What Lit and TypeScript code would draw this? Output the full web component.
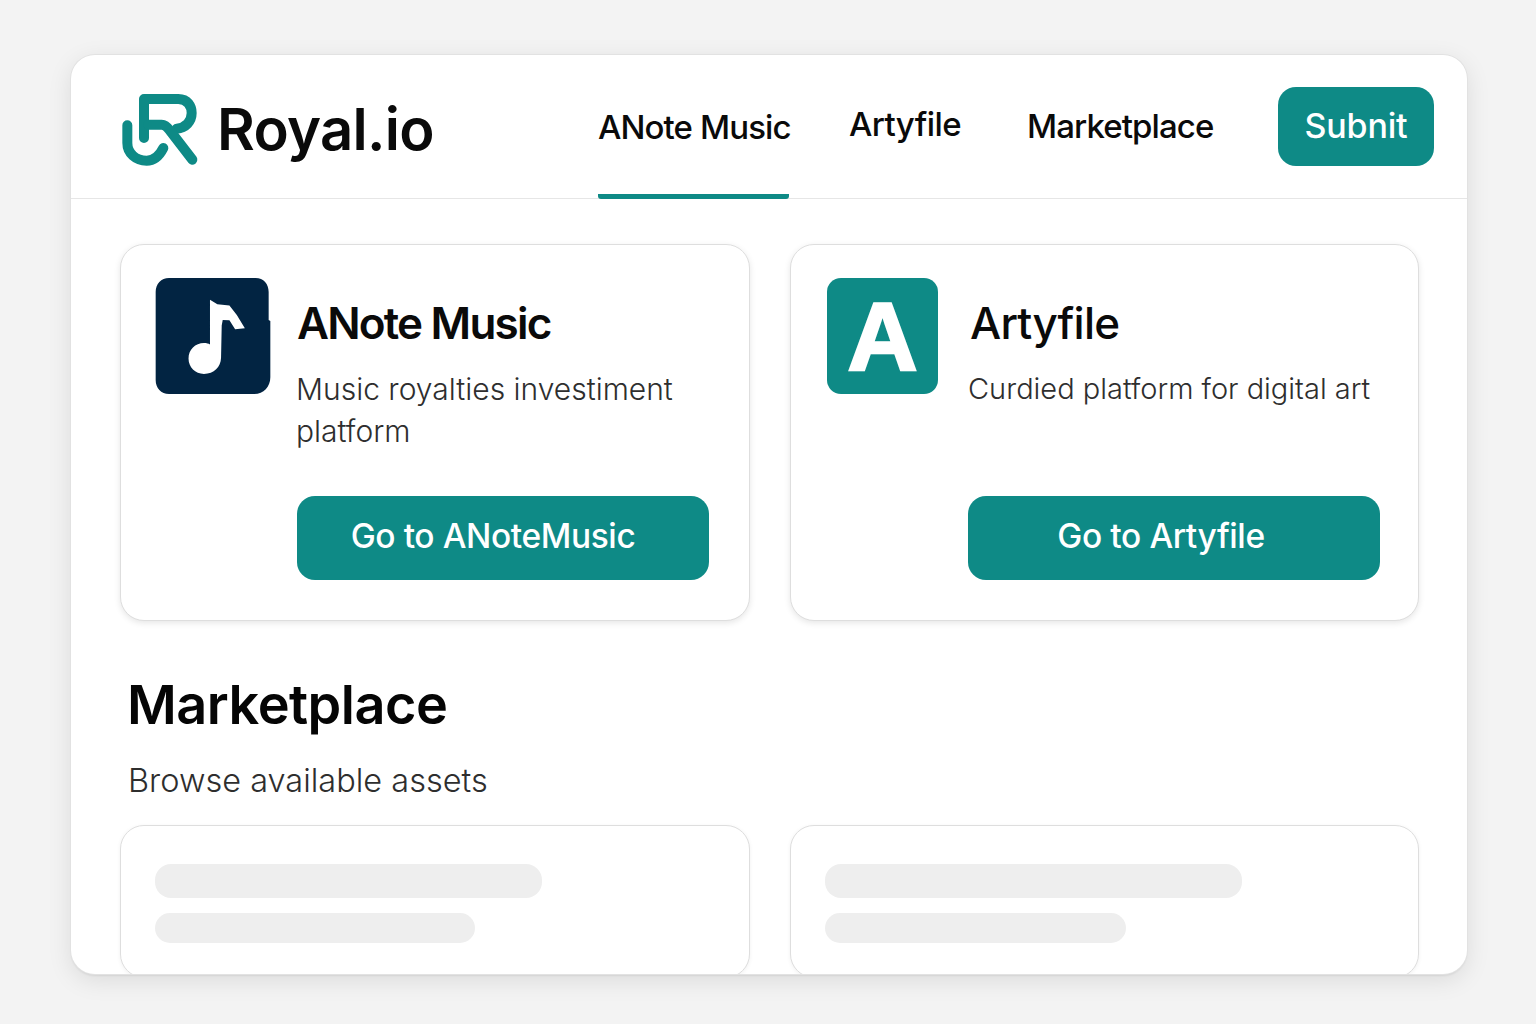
import { LitElement, html, css } from 'lit';
import { customElement } from 'lit/decorators.js';

@customElement('app-root')
export class AppRoot extends LitElement {
  static styles = css`
    :host {
      display: block;
      height: 1024px;
      box-sizing: border-box;
      padding: 55px 69px 50px 71px;
      background: #f3f3f3;
      font-family: Inter, 'Liberation Sans', sans-serif;
      color: #0a0a0a;
    }
    .window {
      height: 100%;
      box-sizing: border-box;
      background: #fff;
      border-radius: 24px;
      overflow: hidden;
      box-shadow: 0 0 0 1px #e2e2e2, 0 2px 2px rgba(0, 0, 0, 0.07), 0 6px 24px rgba(0, 0, 0, 0.1);
    }
    header {
      height: 144px;
      box-sizing: border-box;
      border-bottom: 1.5px solid #e6e6e6;
      display: flex;
      align-items: flex-start;
      padding-left: 44px;
    }
    .brand {
      display: flex;
      align-items: center;
      gap: 12px;
      width: 483px;
      padding-top: 33px;
      flex: none;
    }
    .brand svg { width: 90px; height: 84px; flex: none; }
    .brand span {
      font-size: 58px;
      font-weight: 600;
      letter-spacing: -0.7px;
      line-height: 80px;
      margin-top: -2px;
    }
    nav { display: flex; flex: none; height: 144px; }
    nav a {
      display: block;
      font-size: 33px;
      font-weight: 500;
      letter-spacing: -0.9px;
      white-space: nowrap;
    }
    .n1 {
      width: 191px;
      margin-right: 60px;
      padding-top: 52px;
      height: 87px;
      border-bottom: 5px solid #0e8a86;
      border-radius: 0 0 3px 3px;
    }
    nav .n2 { width: 111px; margin-right: 67px; padding-top: 49px; letter-spacing: -0.6px; }
    .n3 { width: 186px; margin-right: 65px; padding-top: 51px; }
    .submit {
      flex: none;
      margin-top: 32px;
      width: 156px;
      height: 79px;
      border-radius: 18px;
      background: #0e8a86;
      color: #fff;
      display: flex;
      align-items: center;
      justify-content: center;
      font-size: 34px;
      font-weight: 500;
      letter-spacing: -0.2px;
      padding-bottom: 3px;
      box-sizing: border-box;
    }
    .grid {
      display: grid;
      grid-template-columns: 630px 629px;
      gap: 40px;
      padding-left: 49px;
    }
    .apps { margin-top: 45px; }
    .card {
      background: #fff;
      border: 1.5px solid #dedede;
      border-radius: 24px;
      box-sizing: border-box;
    }
    .app {
      height: 377px;
      box-shadow: 0 2px 6px rgba(0, 0, 0, 0.1);
      display: grid;
      grid-template-columns: auto 1fr;
      grid-template-rows: 218px auto;
      padding-top: 33px;
    }
    .icon { display: block; width: 116px; height: 116px; margin-left: 34px; }
    .letter {
      width: 111px;
      height: 116px;
      margin-left: 36px;
      border-radius: 14px;
      background: #0e8a86;
      color: #fff;
      display: flex;
      align-items: center;
      justify-content: center;
      font-family: 'Liberation Sans', Arial, sans-serif;
      font-weight: 700;
      font-size: 97px;
      line-height: 1;
      -webkit-text-stroke: 2.5px #fff;
    }
    .info { padding-left: 26px; }
    .a2 .info { padding-left: 32px; }
    h2 {
      margin: 16px 0 0;
      font-size: 44px;
      line-height: 58px;
      font-weight: 600;
      letter-spacing: -1.8px;
    }
    .a2 h2 { font-weight: 500; letter-spacing: -0.8px; }
    .info p {
      margin: 16px 0 0 -1px;
      font-size: 30px;
      line-height: 42px;
      font-weight: 300;
      color: #2e2e2e;
    }
    .a2 .info p {
      margin-left: -2px;
      font-size: 29px;
    }
    .go {
      grid-column: 1 / -1;
      width: 412px;
      height: 84px;
      border-radius: 18px;
      background: #0e8a86;
      color: #fff;
      margin-left: 176px;
      display: flex;
      align-items: center;
      justify-content: center;
      font-size: 33.5px;
      font-weight: 500;
      letter-spacing: -0.4px;
      padding: 0 20px 4px 0;
      box-sizing: border-box;
    }
    .a2 .go { margin-left: 177px; padding-right: 26px; }
    .market { padding: 44px 0 0 56px; }
    .market h1 {
      margin: 0;
      font-size: 54px;
      line-height: 80px;
      font-weight: 600;
      letter-spacing: -0.5px;
      color: #050505;
    }
    .market p {
      margin: 15px 0 0 1px;
      font-size: 32.5px;
      line-height: 42px;
      font-weight: 300;
      color: #2e2e2e;
    }
    .assets { margin-top: 23px; }
    .asset {
      height: 153px;
      padding: 38px 34px;
      box-shadow: 0 1px 4px rgba(0, 0, 0, 0.06);
    }
    .bar { background: #eeeeee; border-radius: 16px; }
    .bar.big { height: 34px; }
    .bar.small { height: 30px; margin-top: 15px; }
  `;

  render() {
    return html`
      <div class="window">
        <header>
          <div class="brand">
            <svg viewBox="0 0 270 252" fill="none" stroke="#0e8a86" stroke-width="30" stroke-linecap="round" stroke-linejoin="round">
              <path d="M87 150V33H190C218 33 230 55 230 75C230 100 212 120 185 122"></path>
              <path d="M100 110H140C150 110 158 118 165 128L232 215"></path>
              <path d="M37 112V165C37 195 62 218 95 218C120 218 135 200 145 180"></path>
            </svg>
            <span>Royal.io</span>
          </div>
          <nav>
            <a class="n1">ANote Music</a>
            <a class="n2">Artyfile</a>
            <a class="n3">Marketplace</a>
          </nav>
          <div class="submit">Subnit</div>
        </header>

        <section class="grid apps">
          <div class="card app">
            <svg class="icon" viewBox="48 40 342 346">
              <path fill="#022442" d="M88 40H346C370 40 385 58 385 82V165L390 168V336C390 364 370 386 342 386H88C64 386 48 368 48 344V82C48 58 64 40 88 40Z"></path>
              <path fill="#fff" d="M210 105L232 118L268 122L290 150L314 190L285 193L268 166L248 165L245 182L243 278C242 306 222 326 192 326C166 326 146 306 146 280C146 254 166 234 192 234C200 234 206 236 210 238Z"></path>
            </svg>
            <div class="info">
              <h2>ANote Music</h2>
              <p>Music royalties investiment platform</p>
            </div>
            <div class="go">Go to ANoteMusic</div>
          </div>
          <div class="card app a2">
            <div class="letter">A</div>
            <div class="info">
              <h2>Artyfile</h2>
              <p>Curdied platform for digital art</p>
            </div>
            <div class="go">Go to Artyfile</div>
          </div>
        </section>

        <section class="market">
          <h1>Marketplace</h1>
          <p>Browse available assets</p>
        </section>

        <section class="grid assets">
          <div class="card asset">
            <div class="bar big" style="width: 387px"></div>
            <div class="bar small" style="width: 320px"></div>
          </div>
          <div class="card asset">
            <div class="bar big" style="width: 417px"></div>
            <div class="bar small" style="width: 301px"></div>
          </div>
        </section>
      </div>
    `;
  }
}
